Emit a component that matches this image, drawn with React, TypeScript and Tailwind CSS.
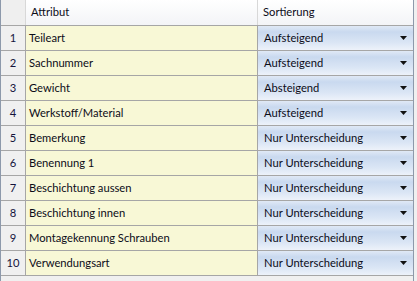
import React from "react";

const rows: [string, string][] = [
  ["Teileart", "Aufsteigend"],
  ["Sachnummer", "Aufsteigend"],
  ["Gewicht", "Absteigend"],
  ["Werkstoff/Material", "Aufsteigend"],
  ["Bemerkung", "Nur Unterscheidung"],
  ["Benennung 1", "Nur Unterscheidung"],
  ["Beschichtung aussen", "Nur Unterscheidung"],
  ["Beschichtung innen", "Nur Unterscheidung"],
  ["Montagekennung Schrauben", "Nur Unterscheidung"],
  ["Verwendungsart", "Nur Unterscheidung"],
];

function Arrow() {
  return (
    <svg width="7" height="4" viewBox="0 0 7 4" className="shrink-0">
      <path d="M0 0 L7 0 L3.5 4 Z" fill="#111" />
    </svg>
  );
}

export default function App() {
  return (
    <div className="w-[417px] h-[281px] overflow-hidden bg-[#f0f0f0] font-['Lato','Noto_Sans',sans-serif] text-[11.2px] text-[#0c0c18]">
      <div className="w-[414px] h-[281px] border-l border-r border-[#8d99ab] flex flex-col">
        <div className="flex h-[26px] shrink-0 border-b border-[#a6a6a6]">
          <div className="w-[25px] shrink-0 border-r border-[#d8d8d8] bg-[#efefef]" />
          <div className="w-[232px] shrink-0 border-r border-[#d8d8d8] bg-gradient-to-b from-[#ffffff] to-[#f3f4f7] flex items-center pl-[5px]">
            Attribut
          </div>
          <div className="flex-1 bg-gradient-to-b from-[#ffffff] to-[#f3f4f7] flex items-center pl-[5px]">
            Sortierung
          </div>
        </div>
        {rows.map(([a, s], i) => (
          <div key={i} className="flex h-[25px] shrink-0 border-b border-[#a6a6a6]">
            <div className="w-[25px] shrink-0 border-r border-[#a6a6a6] bg-[#f0f0f0] flex items-center justify-center text-[#14143c]">
              {i + 1}
            </div>
            <div className="w-[232px] shrink-0 border-r border-[#a6a6a6] bg-[#f8f8d6] flex items-center pl-[3px]">
              {a}
            </div>
            <div className="flex-1 bg-[linear-gradient(to_bottom,#e0e9f6_0%,#c9d9ef_25%,#dbe6f5_70%,#edf2fa_100%)] flex items-center justify-between pl-[6px] pr-[6px]">
              <span>{s}</span>
              <Arrow />
            </div>
          </div>
        ))}
      </div>
    </div>
  );
}
